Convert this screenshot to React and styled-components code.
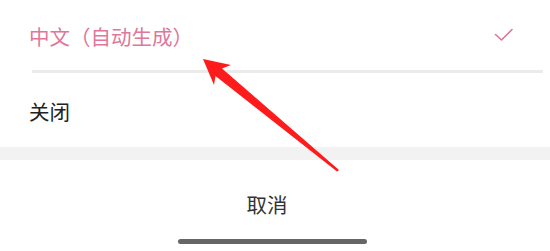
import styled, { createGlobalStyle } from "styled-components";

const GlobalStyle = createGlobalStyle`
  html, body {
    margin: 0;
    padding: 0;
    background: #ffffff;
  }
  body {
    font-family: "Noto Sans CJK SC", "Noto Sans", sans-serif;
  }
`;

const Sheet = styled.div`
  position: relative;
  width: 550px;
  height: 251px;
  overflow: hidden;
  background: #fff;
  display: flex;
  flex-direction: column;
`;

const Option = styled.div`
  height: ${({ $height }) => $height}px;
  display: flex;
  align-items: center;
  justify-content: space-between;
  padding: 0 36px 0 29px;
  font-size: 20.5px;
  color: ${({ $active }) => ($active ? "#e0769a" : "#222")};
`;

const Label = styled.span`
  line-height: 1;
  padding-top: ${({ $offset = 0 }) => $offset}px;
`;

const Divider = styled.div`
  height: 3px;
  margin: 0 7px 0 32px;
  background: #ebebeb;
`;

const Gap = styled.div`
  height: 13px;
  background: #f2f2f2;
`;

const Cancel = styled.div`
  height: 79px;
  display: flex;
  align-items: center;
  justify-content: center;
  padding: 9px 16px 0 0;
  box-sizing: border-box;
  font-size: 20.5px;
  color: #333;
`;

const HomeBar = styled.div`
  width: 189px;
  height: 5px;
  margin-left: 178px;
  border-radius: 3px;
  background: #666;
`;

const Arrow = styled.svg`
  position: absolute;
  left: 0;
  top: 0;
  pointer-events: none;
`;

const Check = () => (
  <svg width="20" height="16" viewBox="0 0 20 16" fill="none">
    <path
      d="M1.5 7.5 L7.5 13 L18 2.5"
      stroke="#e0769a"
      strokeWidth="1.6"
      strokeLinecap="round"
      strokeLinejoin="round"
    />
  </svg>
);

export default function App() {
  return (
    <>
      <GlobalStyle />
      <Sheet>
        <Option $height={70} $active>
          <Label $offset={2}>中文（自动生成）</Label>
          <Check />
        </Option>
        <Divider />
        <Option $height={74}>
          <Label $offset={2}>关闭</Label>
        </Option>
        <Gap />
        <Cancel>取消</Cancel>
        <HomeBar />
        <Arrow width="550" height="251" viewBox="0 0 550 251">
          <polygon
            points="203,59 231,65 222,68.5 339,170 337,171.5 215.5,76 214,85"
            fill="#fe1b1b"
          />
        </Arrow>
      </Sheet>
    </>
  );
}
